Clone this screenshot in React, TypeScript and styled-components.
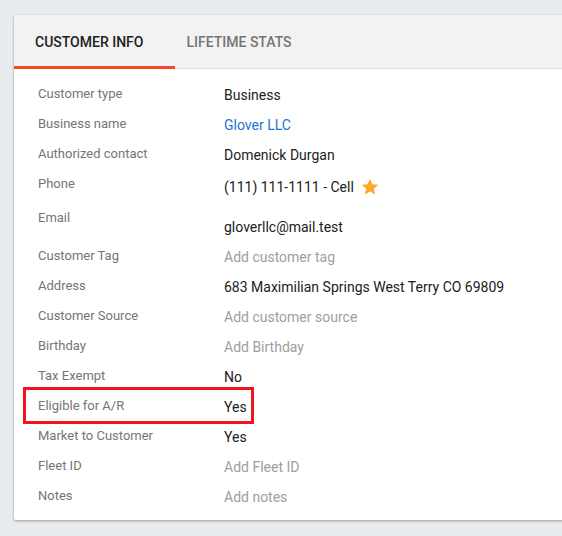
import React from 'react'
import styled, { createGlobalStyle } from 'styled-components'

const GlobalStyle = createGlobalStyle`
  body {
    margin: 0;
    background: #e9ecef;
    font-family: Roboto, "Liberation Sans", Arial, sans-serif;
    overflow: hidden;
  }
`

const Page = styled.div`
  padding: 15px 0 0 14px;
  height: 536px;
  box-sizing: border-box;
  overflow: hidden;
`

const Card = styled.div`
  margin-right: -6px;
  background: white;
  border-radius: 2px;
  box-shadow: 0 1px 3px rgba(0, 0, 0, 0.35);
`

const TabBar = styled.div`
  display: flex;
  height: 54px;
  background: #f2f2f2;
  border-bottom: 1px solid #e0e0e0;
  box-sizing: border-box;
`

const Tab = styled.div<{ $active?: boolean; $pad: string }>`
  display: flex;
  align-items: center;
  padding: ${p => p.$pad};
  font-size: 14px;
  font-weight: 500;
  text-transform: uppercase;
  color: ${p => (p.$active ? '#212121' : '#757575')};
  border-bottom: 3px solid ${p => (p.$active ? '#f24a2b' : 'transparent')};
  margin-bottom: -1px;
  padding-top: 3px;
`

const Body = styled.div`
  padding: 11px 0 8px 24px;
`

const Row = styled.div<{ $highlight?: boolean }>`
  position: relative;
  display: flex;
  align-items: flex-start;
  padding: 5px 0;

  ${p =>
    p.$highlight &&
    `
    &::after {
      content: '';
      position: absolute;
      left: -15px;
      top: -5px;
      width: 231px;
      height: 37px;
      box-sizing: border-box;
      border: 3px solid #f0141c;
      pointer-events: none;
    }
  `}
`

const Label = styled.div`
  width: 186px;
  flex-shrink: 0;
  font-size: 13px;
  line-height: 17px;
  color: #757575;
`

type ValueKind = 'text' | 'link' | 'empty'

const Value = styled.div<{ $kind?: ValueKind; $offset?: number }>`
  display: flex;
  align-items: center;
  gap: 6px;
  font-size: 14px;
  line-height: 20px;
  padding-top: ${p => p.$offset ?? 0}px;
  color: ${p =>
    p.$kind === 'link' ? '#1976d2' : p.$kind === 'empty' ? '#9e9e9e' : '#212121'};
`

const Star = () => (
  <svg width="20" height="20" viewBox="0 0 24 24" style={{ display: 'block', margin: '2px 0' }}>
    <path
      fill="#ffa726"
      d="M12 17.27L18.18 21l-1.64-7.03L22 9.24l-7.19-.61L12 2 9.19 8.63 2 9.24l5.46 4.73L5.82 21z"
    />
  </svg>
)

const App = () => {
  return (
    <Page>
      <GlobalStyle />
      <Card>
        <TabBar>
          <Tab $active $pad="0 32px 0 21px">Customer Info</Tab>
          <Tab $pad="0 24px 0 11px">Lifetime Stats</Tab>
        </TabBar>
        <Body>
          <Row>
            <Label>Customer type</Label>
            <Value>Business</Value>
          </Row>
          <Row>
            <Label>Business name</Label>
            <Value $kind="link">Glover LLC</Value>
          </Row>
          <Row>
            <Label>Authorized contact</Label>
            <Value>Domenick Durgan</Value>
          </Row>
          <Row>
            <Label>Phone</Label>
            <Value>
              (111) 111-1111 - Cell
              <Star />
            </Value>
          </Row>
          <Row>
            <Label>Email</Label>
            <Value $offset={8}>gloverllc@mail.test</Value>
          </Row>
          <Row>
            <Label>Customer Tag</Label>
            <Value $kind="empty">Add customer tag</Value>
          </Row>
          <Row>
            <Label>Address</Label>
            <Value>683 Maximilian Springs West Terry CO 69809</Value>
          </Row>
          <Row>
            <Label>Customer Source</Label>
            <Value $kind="empty">Add customer source</Value>
          </Row>
          <Row>
            <Label>Birthday</Label>
            <Value $kind="empty">Add Birthday</Value>
          </Row>
          <Row>
            <Label>Tax Exempt</Label>
            <Value>No</Value>
          </Row>
          <Row $highlight>
            <Label>Eligible for A/R</Label>
            <Value>Yes</Value>
          </Row>
          <Row>
            <Label>Market to Customer</Label>
            <Value>Yes</Value>
          </Row>
          <Row>
            <Label>Fleet ID</Label>
            <Value $kind="empty">Add Fleet ID</Value>
          </Row>
          <Row>
            <Label>Notes</Label>
            <Value $kind="empty">Add notes</Value>
          </Row>
        </Body>
      </Card>
    </Page>
  )
}

export default App
